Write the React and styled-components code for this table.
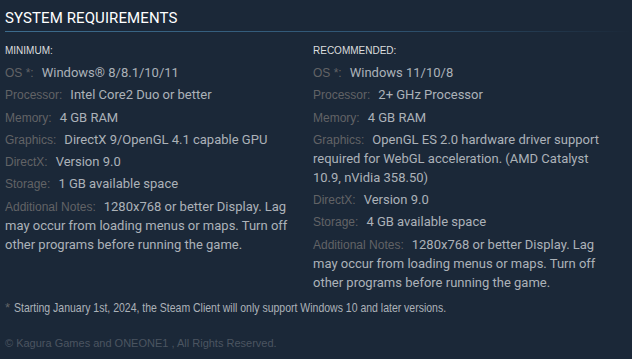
import React from "react";
import styled, { createGlobalStyle } from "styled-components";

const Global = createGlobalStyle`
  html, body { margin: 0; padding: 0; background: #1b2838; }
  body { width: 632px; height: 359px; overflow: hidden; }
`;

const Page = styled.div`
  background: #1b2838;
  width: 632px;
  height: 359px;
  padding: 0 5px;
  box-sizing: border-box;
  font-family: Roboto, "Liberation Sans", sans-serif;
`;

const Heading = styled.h2`
  margin: 0;
  padding-top: 11px;
  font-family: Roboto, "Liberation Sans", sans-serif;
  font-size: 15px;
  font-weight: 400;
  letter-spacing: 0.1px;
  line-height: 15px;
  color: #ffffff;
  text-transform: uppercase;
  &::after {
    content: "";
    display: block;
    height: 1px;
    margin-top: 5px;
    margin-right: -5px;
    background: linear-gradient(to right, #3d6c8d 0%, #2f5472 60%, #1b2838 100%);
  }
`;

const Columns = styled.div`
  display: grid;
  grid-template-columns: 296px 296px;
  column-gap: 12px;
  margin-top: 12px;
`;

const Column = styled.div``;

const ColTitle = styled.div`
  font-family: "Liberation Sans", Arial, sans-serif;
  font-size: 10px;
  line-height: 13px;
  color: #dcdedf;
  text-transform: uppercase;
  margin-bottom: 6px;
`;

const List = styled.ul`
  list-style: none;
  margin: 0;
  padding: 0;
`;

const Item = styled.li`
  font-family: Roboto, "Liberation Sans", sans-serif;
  font-size: 13px;
  line-height: 19px;
  color: #acb2b8;
  margin-bottom: 3.3px;
`;

const Label = styled.span`
  font-family: "Liberation Sans", Arial, sans-serif;
  font-size: 12px;
  line-height: 1;
  color: #626366;
  margin-right: 8px;
`;

const Note = styled.p`
  margin: 4px 0 0;
  font-family: "Liberation Sans", Arial, sans-serif;
  font-size: 13px;
  line-height: 18px;
  color: #acb2b8;
  white-space: nowrap;
`;

const Star = styled.span`
  color: #626366;
  margin-right: 4px;
`;

const NarrowText = styled.span`
  display: inline-block;
  transform: scaleX(0.807);
  transform-origin: left center;
`;

const Copyright = styled.div`
  margin-top: 19px;
  font-family: "Liberation Sans", Arial, sans-serif;
  font-size: 11px;
  line-height: 14px;
  color: #4b5561;
`;

const minimum = [
  ["OS *:", "Windows® 8/8.1/10/11"],
  ["Processor:", "Intel Core2 Duo or better"],
  ["Memory:", "4 GB RAM"],
  ["Graphics:", "DirectX 9/OpenGL 4.1 capable GPU"],
  ["DirectX:", "Version 9.0"],
  ["Storage:", "1 GB available space"],
  [
    "Additional Notes:",
    "1280x768 or better Display. Lag may occur from loading menus or maps. Turn off other programs before running the game.",
  ],
];

const recommended = [
  ["OS *:", "Windows 11/10/8"],
  ["Processor:", "2+ GHz Processor"],
  ["Memory:", "4 GB RAM"],
  [
    "Graphics:",
    "OpenGL ES 2.0 hardware driver support required for WebGL acceleration. (AMD Catalyst 10.9, nVidia 358.50)",
  ],
  ["DirectX:", "Version 9.0"],
  ["Storage:", "4 GB available space"],
  [
    "Additional Notes:",
    "1280x768 or better Display. Lag may occur from loading menus or maps. Turn off other programs before running the game.",
  ],
];

function Req({ title, rows }) {
  return (
    <Column>
      <ColTitle>{title}</ColTitle>
      <List>
        {rows.map(([l, v]) => (
          <Item key={l}>
            <Label>{l}</Label>
            {v}
          </Item>
        ))}
      </List>
    </Column>
  );
}

export default function App() {
  return (
    <Page>
      <Global />
      <Heading>System Requirements</Heading>
      <Columns>
        <Req title="Minimum:" rows={minimum} />
        <Req title="Recommended:" rows={recommended} />
      </Columns>
      <Note>
        <Star>*</Star>
        <NarrowText>
          Starting January 1st, 2024, the Steam Client will only support Windows 10 and later versions.
        </NarrowText>
      </Note>
      <Copyright>© Kagura Games and ONEONE1 , All Rights Reserved.</Copyright>
    </Page>
  );
}
